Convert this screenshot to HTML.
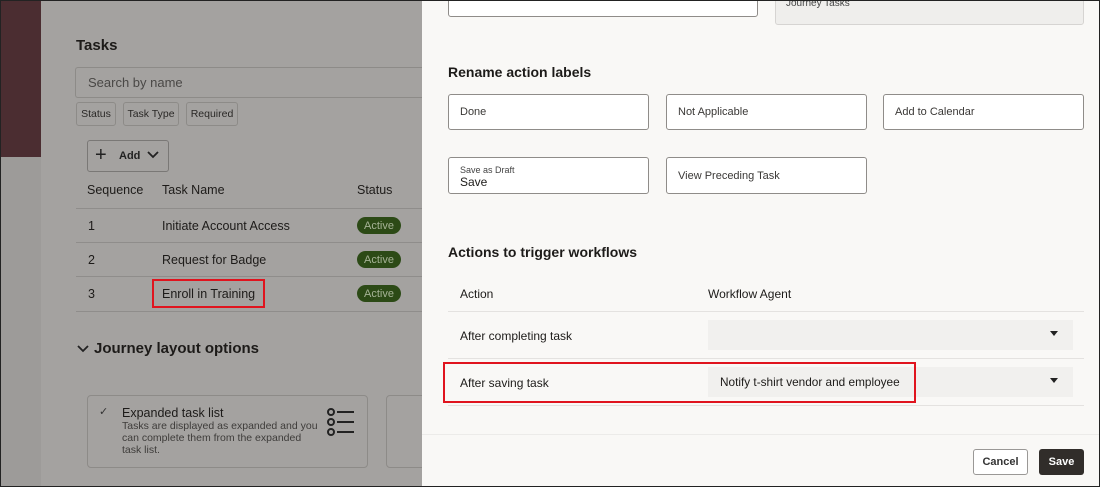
<!DOCTYPE html>
<html><head><style>
*{margin:0;padding:0;box-sizing:border-box}
body{width:1100px;height:487px;position:relative;overflow:hidden;font-family:"Liberation Sans",sans-serif;background:#a2a09e;color:#161513}
.a{position:absolute}
.l{color:#1d1b19}
.box{position:absolute;background:#fff;border:1px solid #8f8c89;border-radius:3px;font-size:11px;color:#3a3836;padding-left:11px;display:flex;align-items:center}
.chip{position:absolute;top:102px;height:24px;border:1px solid #8d8b88;border-radius:3px;font-size:10.5px;color:#2a2826;display:flex;align-items:center;justify-content:center;background:#a4a2a0;white-space:nowrap}
.badge{position:absolute;left:357px;width:44px;height:17px;border-radius:9px;background:#2c4a16;color:#a6b396;font-size:11px;display:flex;align-items:center;justify-content:center}
.hr{position:absolute;height:1px;background:#8f8d8b}
</style></head><body>
<div class="a" style="left:0;top:0;width:41px;height:157px;background:#4b2d31"></div>
<div class="a" style="left:0;top:157px;width:41px;height:330px;background:#9d9b99"></div>
<div class="a" style="left:41px;top:0;width:381px;height:487px;background:#a4a2a0"></div>
<div class="a l" style="left:76px;top:37px;font-size:15px;font-weight:bold">Tasks</div>
<div class="a" style="left:75px;top:67px;width:350px;height:31px;border:1px solid #8d8b88;border-radius:3px 0 0 3px;border-right:none"></div>
<div class="a" style="left:88px;top:75px;font-size:13px;color:#4a4846">Search by name</div>
<div class="chip" style="left:76px;width:40px">Status</div>
<div class="chip" style="left:123px;width:56px">Task Type</div>
<div class="chip" style="left:186px;width:52px">Required</div>
<div class="a" style="left:87px;top:140px;width:82px;height:32px;border:1px solid #7a7876;border-radius:3px"></div>
<div class="a" style="left:95px;top:145px;font-size:20px;color:#222;line-height:20px">+</div>
<div class="a" style="left:119px;top:150px;font-size:11px;font-weight:bold;color:#222">Add</div>
<svg class="a" style="left:147px;top:151px" width="12" height="8"><path d="M1 1L6 6L11 1" stroke="#222" stroke-width="1.8" fill="none"/></svg>
<div class="a l" style="left:87px;top:183px;font-size:12.5px">Sequence</div>
<div class="a l" style="left:162px;top:183px;font-size:12.5px">Task Name</div>
<div class="a l" style="left:357px;top:183px;font-size:12.5px">Status</div>
<div class="hr" style="left:76px;top:208px;width:346px"></div>
<div class="a l" style="left:88px;top:219px;font-size:12.5px">1</div>
<div class="a l" style="left:162px;top:219px;font-size:12.5px">Initiate Account Access</div>
<div class="badge" style="top:217px">Active</div>
<div class="hr" style="left:76px;top:242px;width:346px"></div>
<div class="a l" style="left:88px;top:253px;font-size:12.5px">2</div>
<div class="a l" style="left:162px;top:253px;font-size:12.5px">Request for Badge</div>
<div class="badge" style="top:251px">Active</div>
<div class="hr" style="left:76px;top:276px;width:346px"></div>
<div class="a l" style="left:88px;top:287px;font-size:12.5px">3</div>
<div class="a l" style="left:162px;top:287px;font-size:12.5px">Enroll in Training</div>
<div class="badge" style="top:285px">Active</div>
<div class="a" style="left:152px;top:279px;width:113px;height:29px;border:2px solid #e0141e"></div>
<div class="hr" style="left:76px;top:311px;width:346px"></div>
<svg class="a" style="left:77px;top:345px" width="12" height="8"><path d="M1 1L6 6L11 1" stroke="#222" stroke-width="1.8" fill="none"/></svg>
<div class="a l" style="left:94px;top:340px;font-size:15px;font-weight:bold">Journey layout options</div>
<div class="a" style="left:87px;top:395px;width:281px;height:73px;border:1px solid #8d8b88;border-radius:4px"></div>
<div class="a" style="left:386px;top:395px;width:40px;height:73px;border:1px solid #8d8b88;border-radius:4px"></div>
<div class="a" style="left:99px;top:405px;font-size:11px;color:#333">✓</div>
<div class="a l" style="left:122px;top:406px;font-size:12.5px">Expanded task list</div>
<div class="a" style="left:122px;top:420px;font-size:10.5px;line-height:12px;color:#3e3c3a;width:200px">Tasks are displayed as expanded and you can complete them from the expanded task list.</div>
<svg class="a" style="left:326px;top:408px" width="30" height="28"><g stroke="#222" stroke-width="2" fill="none"><circle cx="5" cy="4" r="3"/><circle cx="5" cy="14" r="3"/><circle cx="5" cy="24" r="3"/><path d="M11 4H28M11 14H28M11 24H28"/></g></svg>

<div class="a" style="left:422px;top:0;width:678px;height:487px;background:#f9f8f6"></div>
<div class="box" style="left:448px;top:-10px;width:310px;height:27px"></div>
<div class="a" style="left:775px;top:-10px;width:309px;height:35px;background:#efeeec;border:1px solid #d6d4d2;border-radius:3px"></div>
<div class="a" style="left:786px;top:0px;font-size:10px;color:#444;line-height:8px;height:8px;overflow:hidden">Journey Tasks</div>
<div class="a l" style="left:448px;top:64px;font-size:14px;font-weight:bold">Rename action labels</div>
<div class="box" style="left:448px;top:94px;width:201px;height:36px">Done</div>
<div class="box" style="left:666px;top:94px;width:201px;height:36px">Not Applicable</div>
<div class="box" style="left:883px;top:94px;width:201px;height:36px">Add to Calendar</div>
<div class="box" style="left:448px;top:157px;width:201px;height:37px"></div>
<div class="a" style="left:460px;top:165px;font-size:9px;color:#444">Save as Draft</div>
<div class="a l" style="left:460px;top:175px;font-size:12px">Save</div>
<div class="box" style="left:666px;top:157px;width:201px;height:37px">View Preceding Task</div>
<div class="a l" style="left:448px;top:244px;font-size:14px;font-weight:bold">Actions to trigger workflows</div>
<div class="a l" style="left:460px;top:287px;font-size:12px">Action</div>
<div class="a l" style="left:708px;top:287px;font-size:12px">Workflow Agent</div>
<div class="a" style="left:448px;top:311px;width:636px;height:1px;background:#e4e2e0"></div>
<div class="a l" style="left:460px;top:329px;font-size:12px">After completing task</div>
<div class="a" style="left:708px;top:320px;width:365px;height:30px;background:#f1f0ee"></div>
<div class="a" style="left:1050px;top:331px;width:0;height:0;border-left:4px solid transparent;border-right:4px solid transparent;border-top:5px solid #222"></div>
<div class="a" style="left:448px;top:358px;width:636px;height:1px;background:#e4e2e0"></div>
<div class="a l" style="left:460px;top:376px;font-size:12px">After saving task</div>
<div class="a" style="left:708px;top:367px;width:365px;height:30px;background:#f1f0ee"></div>
<div class="a l" style="left:720px;top:375px;font-size:11.8px">Notify t-shirt vendor and employee</div>
<div class="a" style="left:1050px;top:378px;width:0;height:0;border-left:4px solid transparent;border-right:4px solid transparent;border-top:5px solid #222"></div>
<div class="a" style="left:448px;top:405px;width:636px;height:1px;background:#e4e2e0"></div>
<div class="a" style="left:443px;top:362px;width:473px;height:41px;border:2px solid #e0141e"></div>
<div class="a" style="left:422px;top:434px;width:678px;height:1px;background:#ecebe9"></div>
<div class="a" style="left:973px;top:449px;width:55px;height:26px;border:1px solid #9a9896;border-radius:3px;background:#fff;font-size:11px;font-weight:bold;color:#333;display:flex;align-items:center;justify-content:center">Cancel</div>
<div class="a" style="left:1039px;top:449px;width:45px;height:26px;border-radius:3px;background:#312d2a;font-size:11px;font-weight:bold;color:#fff;display:flex;align-items:center;justify-content:center">Save</div>
<div class="a" style="left:0;top:0;width:1100px;height:487px;border:1px solid #222"></div>
</body></html>
